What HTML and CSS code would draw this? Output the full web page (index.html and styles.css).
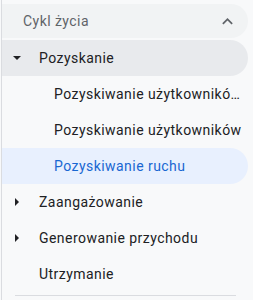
FILE: index.html
```html
<!DOCTYPE html>
<html lang="pl">
<head>
    <meta charset="UTF-8">
    <meta name="viewport" content="width=device-width, initial-scale=1.0">
    <title>Cykl życia</title>
    <link rel="stylesheet" href="styles.css">
</head>
<body>

    <nav class="sidebar">
        <!-- Section header -->
        <div class="section-head">
            <span>Cykl życia</span>
            <svg class="chevron" width="12" height="8" viewBox="0 0 12 8">
                <path d="M1.4 7.4L6 2.8l4.6 4.6L12 6 6 0 0 6z" fill="#5f6368"/>
            </svg>
        </div>

        <!-- Expanded group -->
        <div class="row group open">
            <span class="caret down"></span>
            <span class="label">Pozyskanie</span>
        </div>
        <div class="row child"><span class="label">Pozyskiwanie użytkowników – przegląd</span></div>
        <div class="row child"><span class="label">Pozyskiwanie użytkowników</span></div>
        <div class="row child active"><span class="label">Pozyskiwanie ruchu</span></div>

        <!-- Collapsed groups -->
        <div class="row group">
            <span class="caret right"></span>
            <span class="label">Zaangażowanie</span>
        </div>
        <div class="row group">
            <span class="caret right"></span>
            <span class="label">Generowanie przychodu</span>
        </div>
        <div class="row group">
            <span class="caret"></span>
            <span class="label">Utrzymanie</span>
        </div>

        <hr class="divider">
    </nav>

</body>
</html>
```

FILE: styles.css
```css
body {
    margin: 0;
    background-color: #f8f9fa;
    font-family: Roboto, "Liberation Sans", Arial, sans-serif;
    font-size: 14px;
    letter-spacing: 0.45px;
    color: #202124;
}
.sidebar {
    border-left: 1px solid #dadce0;
    margin-left: 1px;
    height: 300px;
    padding-top: 4px;
    box-sizing: border-box;
    overflow: hidden;
}
.section-head {
    display: flex;
    align-items: center;
    justify-content: space-between;
    height: 34px;
    margin-bottom: 2px;
    margin-right: 5px;
    padding: 0 15px 0 21px;
    background-color: #f1f3f4;
    border-radius: 0 17px 17px 0;
    color: #5f6368;
}
.chevron {
    width: 11px;
    height: 7px;
}
.row {
    display: flex;
    align-items: center;
    height: 36px;
    margin-right: 5px;
    border-radius: 0 18px 18px 0;
    padding-right: 4px;
}
.row.open {
    background-color: #e8eaed;
}
.row.active {
    background-color: #e8f0fe;
    color: #1967d2;
}
.caret {
    width: 27px;
    margin-left: 10px;
    height: 10px;
    position: relative;
    flex-shrink: 0;
}
.caret.down::before {
    content: "";
    position: absolute;
    left: 1px;
    top: 3px;
    border-left: 4px solid transparent;
    border-right: 4px solid transparent;
    border-top: 4px solid #202124;
}
.caret.right::before {
    content: "";
    position: absolute;
    left: 3px;
    top: 1px;
    border-top: 4px solid transparent;
    border-bottom: 4px solid transparent;
    border-left: 4px solid #202124;
}
.row.child {
    padding-left: 52px;
}
.label {
    white-space: nowrap;
    overflow: hidden;
    text-overflow: ellipsis;
}
.divider {
    border: none;
    border-top: 1px solid #dadce0;
    margin: 3px 17px 0 13px;
}
```
